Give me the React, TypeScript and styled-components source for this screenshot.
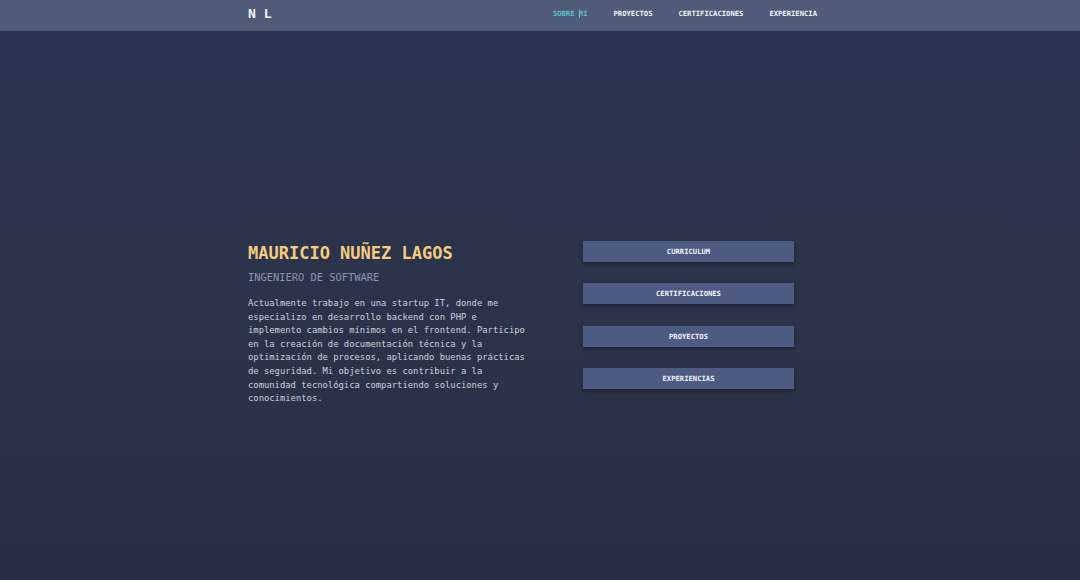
import React from "react";
import styled, { createGlobalStyle } from "styled-components";

const Global = createGlobalStyle`
  html, body { margin: 0; padding: 0; }
  body {
    background: linear-gradient(180deg, #2d3651 0%, #2b3349 60%, #282f45 100%);
    min-height: 580px;
    font-family: "DejaVu Sans Mono", "Liberation Mono", monospace;
  }
`;

const Page = styled.div`
  min-height: 580px;
  display: flex;
  flex-direction: column;
`;

const NavBar = styled.header`
  height: 31px;
  background: #4f5b78;
  border-bottom: 1px solid #45506b;
  box-sizing: border-box;
  display: flex;
  justify-content: center;
`;

const NavInner = styled.div`
  width: 584px;
  display: flex;
  align-items: center;
  justify-content: space-between;
`;

const Logo = styled.div`
  color: #f1f3f8;
  font-weight: bold;
  font-size: 13px;
  white-space: pre;
  padding-bottom: 3px;
`;

const Links = styled.nav`
  display: flex;
  gap: 26px;
  padding-right: 15px;
  padding-bottom: 4px;
`;

const NavLink = styled.a<{ $active?: boolean }>`
  font-size: 7.2px;
  font-weight: bold;
  color: ${(p) => (p.$active ? "#5fbccb" : "#eef1f7")};
  text-decoration: none;
  position: relative;
`;

const Cursor = styled.span`
  display: inline-block;
  width: 1px;
  height: 9px;
  background: #5fbccb;
  vertical-align: -2px;
  margin-right: -1px;
`;

const Main = styled.main`
  display: flex;
  justify-content: center;
  padding-top: 210px;
`;

const Content = styled.div`
  width: 584px;
  display: flex;
  justify-content: space-between;
`;

const Intro = styled.section`
  width: 280px;
`;

const Name = styled.h1`
  margin: 0;
  font-size: 17px;
  line-height: 20px;
  font-weight: bold;
  color: #f5cd7e;
  padding-top: 2px;
`;

const Role = styled.h2`
  margin: 8px 0 0;
  font-size: 10.4px;
  line-height: 13px;
  font-weight: normal;
  color: #8c95aa;
`;

const Bio = styled.p`
  margin: 13px 0 0;
  font-size: 8.85px;
  line-height: 13.6px;
  color: #cdd1db;
`;

const Actions = styled.div`
  width: 211px;
  display: flex;
  flex-direction: column;
  gap: 21.3px;
  margin-right: 38px;
`;

const ActionButton = styled.button`
  height: 21px;
  border: none;
  background: #4d5b83;
  color: #eef1f8;
  font-family: inherit;
  font-size: 7.2px;
  font-weight: bold;
  box-shadow: 0 2px 4px rgba(0, 0, 0, 0.35);
  padding: 0;
  cursor: pointer;
`;

export default function App() {
  return (
    <Page>
      <Global />
      <NavBar>
        <NavInner>
          <Logo>N L</Logo>
          <Links>
            <NavLink $active href="#">
              SOBRE <Cursor />MI
            </NavLink>
            <NavLink href="#">PROYECTOS</NavLink>
            <NavLink href="#">CERTIFICACIONES</NavLink>
            <NavLink href="#">EXPERIENCIA</NavLink>
          </Links>
        </NavInner>
      </NavBar>
      <Main>
        <Content>
          <Intro>
            <Name>MAURICIO NUÑEZ LAGOS</Name>
            <Role>INGENIERO DE SOFTWARE</Role>
            <Bio>
              Actualmente trabajo en una startup IT, donde me especializo en
              desarrollo backend con PHP e implemento cambios mínimos en el
              frontend. Participo en la creación de documentación técnica y la
              optimización de procesos, aplicando buenas prácticas de
              seguridad. Mi objetivo es contribuir a la comunidad tecnológica
              compartiendo soluciones y conocimientos.
            </Bio>
          </Intro>
          <Actions>
            <ActionButton>CURRICULUM</ActionButton>
            <ActionButton>CERTIFICACIONES</ActionButton>
            <ActionButton>PROYECTOS</ActionButton>
            <ActionButton>EXPERIENCIAS</ActionButton>
          </Actions>
        </Content>
      </Main>
    </Page>
  );
}
